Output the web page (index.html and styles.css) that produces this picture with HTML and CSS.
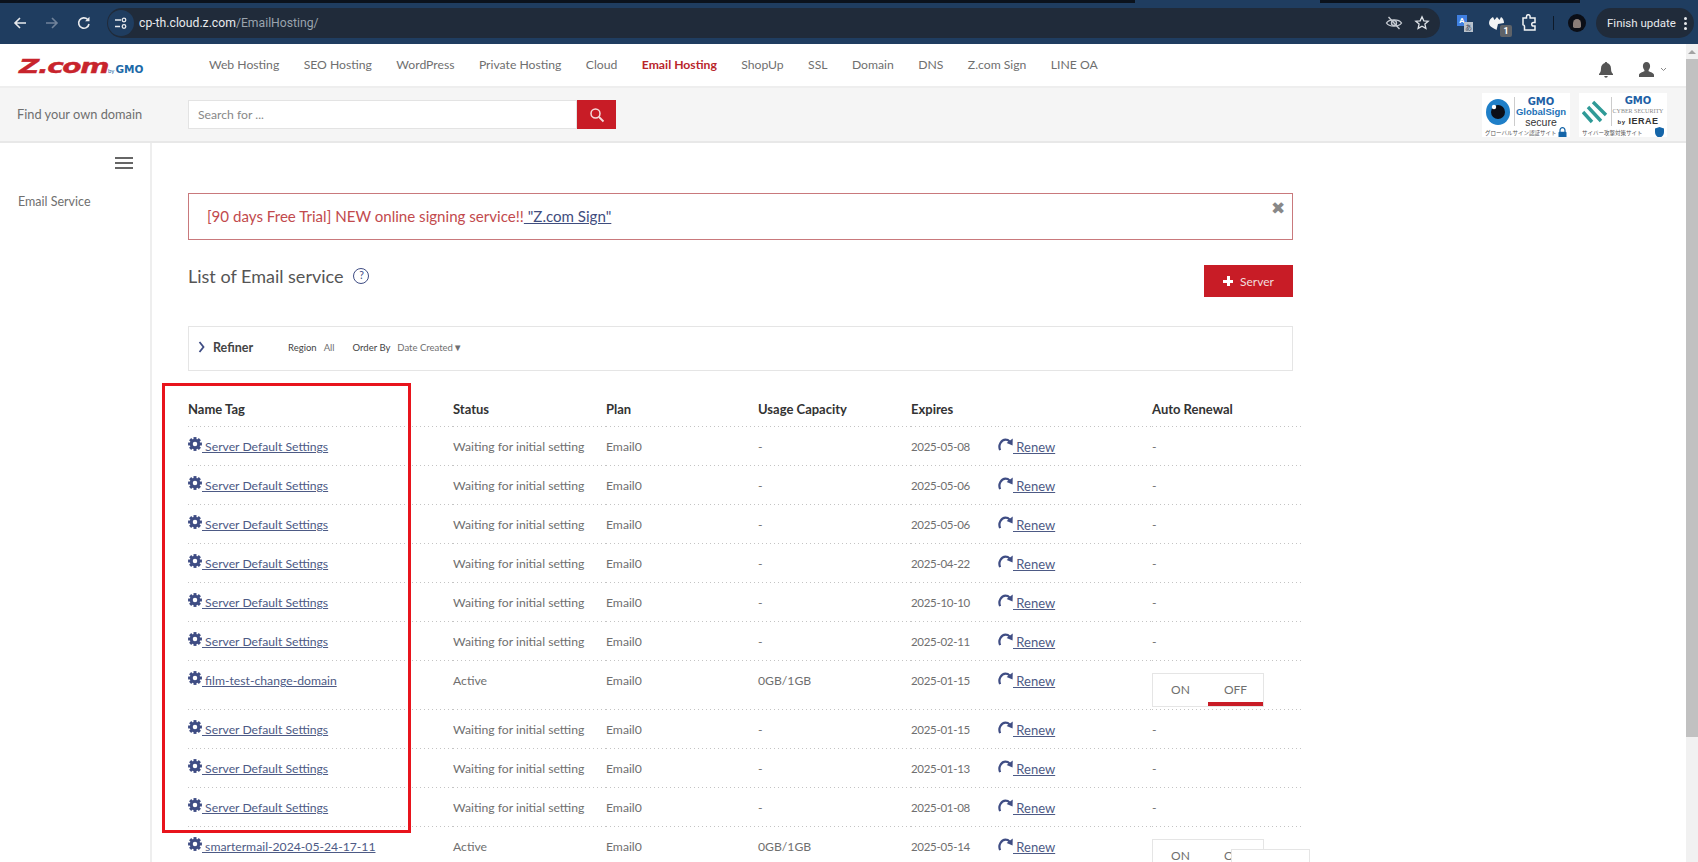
FILE: index.html
```html
<!DOCTYPE html>
<html lang="en">
<head>
<meta charset="utf-8">
<title>Email Hosting</title>
<link rel="stylesheet" href="styles.css">
</head>
<body>
<svg class="defs" width="0" height="0" aria-hidden="true">
  <symbol id="gear" viewBox="0 0 16 16">
    <g fill="#3f4d84">
      <rect x="6.300" y="0.100" width="3.400" height="4"/>
      <rect x="6.300" y="0.100" width="3.400" height="4" transform="rotate(45 8 8)"/>
      <rect x="6.300" y="0.100" width="3.400" height="4" transform="rotate(90 8 8)"/>
      <rect x="6.300" y="0.100" width="3.400" height="4" transform="rotate(135 8 8)"/>
      <rect x="6.300" y="0.100" width="3.400" height="4" transform="rotate(180 8 8)"/>
      <rect x="6.300" y="0.100" width="3.400" height="4" transform="rotate(225 8 8)"/>
      <rect x="6.300" y="0.100" width="3.400" height="4" transform="rotate(270 8 8)"/>
      <rect x="6.300" y="0.100" width="3.400" height="4" transform="rotate(315 8 8)"/>
    </g>
    <circle cx="8" cy="8" r="4.300" fill="none" stroke="#3f4d84" stroke-width="3.400"/>
  </symbol>
  <symbol id="renew" viewBox="0 0 16 14">
    <path d="M2.200 13C-.2 7.500 3.600 1.800 8 1.800c1.800 0 3.300.7 4.400 2" fill="none" stroke="#3f4d84" stroke-width="2.400"/>
    <path d="M15.800 .6 15.600 8 9.200 5.400z" fill="#3f4d84"/>
  </symbol>
</svg>

<div class="chrome">
  <div class="tabstrip">
    <span class="tabdark tab-a"></span>
    <span class="tabdark tab-b"></span>
  </div>
  <div class="toolbar">
    <svg class="nav-ic first" width="16" height="16" viewBox="0 0 16 16"><path d="M14 8H3M8 3 3 8l5 5" fill="none" stroke="#e8eaed" stroke-width="1.600"/></svg>
    <svg class="nav-ic" width="16" height="16" viewBox="0 0 16 16"><path d="M2 8h11M8 3l5 5-5 5" fill="none" stroke="#71839a" stroke-width="1.600"/></svg>
    <svg class="nav-ic" width="16" height="16" viewBox="0 0 16 16"><path d="M13 9a5.200 5.200 0 1 1-1.300-4.500" fill="none" stroke="#e8eaed" stroke-width="1.600"/><path d="M13.500 1.800v4.400H9.100z" fill="#e8eaed"/></svg>
    <div class="omnibox">
      <span class="site-chip">
        <svg width="14" height="14" viewBox="0 0 14 14"><g fill="none" stroke="#e8eaed" stroke-width="1.300"><path d="M1 4h6M1 10.500h5"/><circle cx="10" cy="4" r="1.800"/><circle cx="10" cy="10.500" r="1.800"/></g></svg>
      </span>
      <span class="url">cp-th.cloud.z.com<span class="url-path">/EmailHosting/</span></span>
      <span class="omni-right">
        <svg width="18" height="16" viewBox="0 0 18 16"><g fill="none" stroke="#c5cad1" stroke-width="1.400"><path d="M1.500 8C4 3.800 14 3.800 16.500 8 14 12.200 4 12.200 1.500 8z"/><circle cx="9" cy="8" r="2.500"/><path d="M3.500 2 14.500 14"/></g></svg>
        <svg width="16" height="16" viewBox="0 0 16 16"><path d="m8 1.800 1.800 4 4.400.4-3.300 2.900 1 4.300L8 11.200l-3.900 2.200 1-4.300-3.300-2.900 4.400-.4z" fill="none" stroke="#dfe3e8" stroke-width="1.300"/></svg>
      </span>
    </div>
    <div class="ext-group">
      <span class="ext-translate"><span class="tr-a">A</span><span class="tr-b">あ</span></span>
      <span class="ext-badged">
        <svg width="20" height="16" viewBox="0 0 20 16"><path d="M2 8c0-3 2-5 4-6l1.500 3L10 2l2.500 3L14 2c2 1 3 3.500 3 6l-6 1-1.500 6C7 13 2 12 2 8z" fill="#f1f3f4"/></svg>
        <span class="ext-count">1</span>
      </span>
      <svg class="ext-puzzle" width="18" height="18" viewBox="0 0 18 18"><path d="M3 4h3.500V2.500a1.800 1.800 0 0 1 3.600 0V4H15v4.500h-1.500a1.800 1.800 0 0 0 0 3.600H15V16H4.500v-3.500a1.800 1.800 0 0 0-1.500-1.800z" fill="none" stroke="#f1f3f4" stroke-width="1.500"/></svg>
      <span class="ext-sep"></span>
      <span class="avatar"><span class="avatar-in"></span></span>
      <span class="finish">Finish update<span class="dots"><i></i><i></i><i></i></span></span>
    </div>
  </div>
</div>

<div class="viewport">
  <div class="page">
    <header class="site-head">
      <div class="logo"><span class="logo-z">Z.com</span><span class="logo-by">by</span><span class="logo-gmo">GMO</span></div>
      <nav class="main-nav">
        <a>Web Hosting</a><a>SEO Hosting</a><a>WordPress</a><a>Private Hosting</a><a>Cloud</a><a class="current">Email Hosting</a><a>ShopUp</a><a>SSL</a><a>Domain</a><a>DNS</a><a>Z.com Sign</a><a>LINE OA</a>
      </nav>
      <div class="head-icons">
        <svg width="16" height="17" viewBox="0 0 16 17"><path d="M8 1c.8 0 1.200.5 1.200 1.100C11.500 2.700 13 4.700 13 7.500c0 3 .8 4.300 2 5.500v1H1v-1c1.200-1.200 2-2.500 2-5.500 0-2.800 1.500-4.800 3.800-5.400C6.800 1.500 7.200 1 8 1zM6.300 15h3.400c0 1-.7 1.700-1.700 1.700S6.300 16 6.300 15z" fill="#555"/></svg>
        <span class="user-ic">
          <svg width="17" height="17" viewBox="0 0 17 17"><path d="M8.500 1c2.300 0 3.600 1.700 3.600 4 0 1.700-.7 3-1.500 4v1.300c2 .8 5.400 1.800 5.400 3.700v2H1v-2c0-1.900 3.400-2.900 5.400-3.700V9c-.8-1-1.500-2.300-1.500-4 0-2.300 1.300-4 3.600-4z" fill="#555"/></svg>
          <svg width="7" height="5" viewBox="0 0 7 5"><path d="m1 1 2.500 2.500L6 1" fill="none" stroke="#888" stroke-width="1"/></svg>
        </span>
      </div>
    </header>

    <div class="search-band">
      <span class="find-label">Find your own domain</span>
      <div class="search-box">
        <span class="search-input">Search for ...</span>
        <span class="search-btn"><svg width="16" height="16" viewBox="0 0 16 16"><circle cx="6.500" cy="6.500" r="4.500" fill="none" stroke="#f5dcdc" stroke-width="1.500"/><path d="m10 10 4.500 4.500" stroke="#f5dcdc" stroke-width="1.800"/></svg></span>
      </div>
      <div class="badges">
        <div class="badge">
          <div class="badge-top">
            <svg class="eye" width="26" height="28" viewBox="0 0 26 28"><ellipse cx="13" cy="14" rx="12" ry="13" fill="#1f7fc8"/><circle cx="13" cy="14" r="7" fill="#0c0f18"/><circle cx="9" cy="9" r="2.200" fill="#fff"/></svg>
            <div class="badge-txt">
              <span class="b-gmo">GMO</span>
              <span class="b-gs">GlobalSign</span>
              <span class="b-sec">secure</span>
            </div>
          </div>
          <div class="badge-foot"><span>グローバルサイン認証サイト</span><svg width="9" height="11" viewBox="0 0 9 11"><path d="M2 5V3.200a2.500 2.500 0 0 1 5 0V5" fill="none" stroke="#1565a8" stroke-width="1.200"/><rect x=".5" y="4.800" width="8" height="6" rx="1" fill="#1565a8"/></svg></div>
        </div>
        <div class="badge">
          <div class="badge-top">
            <svg class="eye" width="26" height="24" viewBox="0 0 26 24"><g stroke="#2f9a97" stroke-width="3.400"><path d="M11 2 24 15M6 7 19 21M1 12 10 22"/></g></svg>
            <div class="badge-txt">
              <span class="b-gmo">GMO</span>
              <span class="b-cy">CYBER SECURITY</span>
              <span class="b-ie"><small>by</small> IERAE</span>
            </div>
          </div>
          <div class="badge-foot"><span>サイバー攻撃対策サイト</span><svg width="9" height="11" viewBox="0 0 9 11"><path d="M4.500 0 9 1.500V5c0 3-2 5-4.500 6C2 10 0 8 0 5V1.500z" fill="#1565a8"/></svg></div>
        </div>
      </div>
    </div>

    <div class="content-row">
      <aside class="side">
        <div class="burger"><i></i><i></i><i></i></div>
        <a class="side-link">Email Service</a>
      </aside>
      <main class="main">
        <div class="alert">
          <span>[90 days Free Trial] NEW online signing service!!<a class="alert-link"> "Z.com Sign"</a></span>
          <span class="alert-x">✖</span>
        </div>
        <div class="title-row">
          <h1 class="title">List of Email service<span class="help">?</span></h1>
          <button class="add-btn"><span class="plus"></span>Server</button>
        </div>
        <div class="refiner">
          <svg width="7" height="12" viewBox="0 0 7 12"><path d="m1.500 1 4 5-4 5" fill="none" stroke="#3f4d84" stroke-width="1.800"/></svg>
          <strong class="ref-name">Refiner</strong>
          <span class="ref-key">Region</span><span class="ref-val gap-a">All</span>
          <span class="ref-key">Order By</span><span class="ref-val">Date Created▼</span>
        </div>
        <table class="servers">
          <thead>
            <tr><th class="c-name">Name Tag</th><th class="c-status">Status</th><th class="c-plan">Plan</th><th class="c-usage">Usage Capacity</th><th class="c-exp">Expires</th><th class="c-renew"></th><th class="c-auto">Auto Renewal</th></tr>
          </thead>
          <tbody>
            <tr><td><svg class="gear"><use href="#gear"/></svg><a class="lnk"> Server Default Settings</a></td><td>Waiting for initial setting</td><td>Email0</td><td>-</td><td class="date">2025-05-08</td><td><svg class="re"><use href="#renew"/></svg><a class="lnk renew"> Renew</a></td><td>-</td></tr>
            <tr><td><svg class="gear"><use href="#gear"/></svg><a class="lnk"> Server Default Settings</a></td><td>Waiting for initial setting</td><td>Email0</td><td>-</td><td class="date">2025-05-06</td><td><svg class="re"><use href="#renew"/></svg><a class="lnk renew"> Renew</a></td><td>-</td></tr>
            <tr><td><svg class="gear"><use href="#gear"/></svg><a class="lnk"> Server Default Settings</a></td><td>Waiting for initial setting</td><td>Email0</td><td>-</td><td class="date">2025-05-06</td><td><svg class="re"><use href="#renew"/></svg><a class="lnk renew"> Renew</a></td><td>-</td></tr>
            <tr><td><svg class="gear"><use href="#gear"/></svg><a class="lnk"> Server Default Settings</a></td><td>Waiting for initial setting</td><td>Email0</td><td>-</td><td class="date">2025-04-22</td><td><svg class="re"><use href="#renew"/></svg><a class="lnk renew"> Renew</a></td><td>-</td></tr>
            <tr><td><svg class="gear"><use href="#gear"/></svg><a class="lnk"> Server Default Settings</a></td><td>Waiting for initial setting</td><td>Email0</td><td>-</td><td class="date">2025-10-10</td><td><svg class="re"><use href="#renew"/></svg><a class="lnk renew"> Renew</a></td><td>-</td></tr>
            <tr><td><svg class="gear"><use href="#gear"/></svg><a class="lnk"> Server Default Settings</a></td><td>Waiting for initial setting</td><td>Email0</td><td>-</td><td class="date">2025-02-11</td><td><svg class="re"><use href="#renew"/></svg><a class="lnk renew"> Renew</a></td><td>-</td></tr>
            <tr><td><svg class="gear"><use href="#gear"/></svg><a class="lnk"> film-test-change-domain</a></td><td>Active</td><td>Email0</td><td>0GB/1GB</td><td class="date">2025-01-15</td><td><svg class="re"><use href="#renew"/></svg><a class="lnk renew"> Renew</a></td><td class="t-cell"><div class="toggle"><span>ON</span><span class="off">OFF</span></div></td></tr>
            <tr><td><svg class="gear"><use href="#gear"/></svg><a class="lnk"> Server Default Settings</a></td><td>Waiting for initial setting</td><td>Email0</td><td>-</td><td class="date">2025-01-15</td><td><svg class="re"><use href="#renew"/></svg><a class="lnk renew"> Renew</a></td><td>-</td></tr>
            <tr><td><svg class="gear"><use href="#gear"/></svg><a class="lnk"> Server Default Settings</a></td><td>Waiting for initial setting</td><td>Email0</td><td>-</td><td class="date">2025-01-13</td><td><svg class="re"><use href="#renew"/></svg><a class="lnk renew"> Renew</a></td><td>-</td></tr>
            <tr><td><svg class="gear"><use href="#gear"/></svg><a class="lnk"> Server Default Settings</a></td><td>Waiting for initial setting</td><td>Email0</td><td>-</td><td class="date">2025-01-08</td><td><svg class="re"><use href="#renew"/></svg><a class="lnk renew"> Renew</a></td><td>-</td></tr>
            <tr><td><svg class="gear"><use href="#gear"/></svg><a class="lnk"> smartermail-2024-05-24-17-11</a></td><td>Active</td><td>Email0</td><td>0GB/1GB</td><td class="date">2025-05-14</td><td><svg class="re"><use href="#renew"/></svg><a class="lnk renew"> Renew</a></td><td class="t-cell"><div class="toggle"><span>ON</span><span class="off">OFF</span></div></td></tr>
          </tbody>
        </table>
        <div class="highlight"></div>
        <div class="float-tip"></div>
      </main>
    </div>
  </div>
  <div class="scrollbar">
    <span class="sb-arrow"></span>
    <span class="sb-thumb"></span>
  </div>
</div>
</body>
</html>
```

FILE: styles.css
```css
* { box-sizing: border-box; }
html, body { margin: 0; height: 862px; overflow: hidden; background: #fff; }
body { font-family: "Lato", "Liberation Sans", sans-serif; font-size: 12.2px; color: #6f6f6f; }
.defs { position: absolute; }

/* browser chrome */
.chrome { height: 44px; background: #1f3d60; }
.tabstrip { height: 8px; display: flex; background: #1f3d60; }
.tabdark { height: 3px; background: #0b121c; display: block; }
.tab-a { width: 1135px; }
.tab-b { width: 260px; margin-left: 185px; }
.toolbar { height: 30px; display: flex; align-items: center; padding-left: 12px; }
.nav-ic { margin-right: 16px; flex: none; }
.omnibox { width: 1333px; height: 30px; margin-left: -1px; background: #202b3a; border-radius: 15px; display: flex; align-items: center; padding: 0 10px 0 1px; flex: none; }
.site-chip { width: 26px; height: 26px; border-radius: 50%; background: #1f3d60; display: flex; align-items: center; justify-content: center; }
.url { font-family: "Roboto", sans-serif; font-size: 12.200px; color: #e8eaed; margin-left: 5px; }
.url-path { color: #9aa3ad; }
.omni-right { margin-left: auto; display: flex; align-items: center; gap: 11px; }
.ext-group { display: flex; align-items: center; flex: 1; padding-left: 17px; position: relative; }
.ext-translate { width: 16px; height: 17px; position: relative; display: block; }
.tr-a { position: absolute; left: 0; top: 0; width: 10px; height: 11px; background: #3f7fe0; color: #fff; font: 700 8px/11px "Roboto", sans-serif; text-align: center; }
.tr-b { position: absolute; right: 0; bottom: 0; width: 9px; height: 10px; background: #b9c2cc; color: #39465a; font: 7px/10px "Noto Sans CJK JP", sans-serif; text-align: center; }
.ext-badged { position: relative; margin-left: 14px; display: block; width: 20px; height: 16px; }
.ext-count { position: absolute; right: -5px; bottom: -6px; width: 12px; height: 12px; background: #5f6368; color: #fff; border-radius: 2px; font: 700 9px/12px "Roboto", sans-serif; text-align: center; }
.ext-puzzle { margin-left: 13px; }
.ext-sep { width: 1px; height: 14px; background: #0e1a29; margin-left: 15px; }
.avatar { width: 18px; height: 18px; border-radius: 50%; background: #0b0e16; margin-left: 14px; display: flex; align-items: center; justify-content: center; }
.avatar-in { width: 8px; height: 9px; background: #8a7d78; border-radius: 50% 50% 20% 20%; }
.finish { height: 30px; width: 98px; margin-left: 10px; background: #202b3a; border-radius: 15px; color: #e8eaed; font: 11.500px/30px "Roboto", sans-serif; padding-left: 11px; display: flex; align-items: center; flex: none; white-space: nowrap; }
.dots { display: flex; flex-direction: column; gap: 2px; margin-left: 8px; }
.dots i { width: 3px; height: 3px; border-radius: 50%; background: #e8eaed; display: block; }

/* page */
.viewport { display: flex; height: 818px; overflow: hidden; }
.page { flex: 1; min-width: 0; }
.scrollbar { width: 12px; background: #f1f1f1; display: flex; flex-direction: column; align-items: center; flex: none; padding-top: 6px; }
.sb-arrow { width: 0; height: 0; border-left: 4px solid transparent; border-right: 4px solid transparent; border-bottom: 4px solid #a3a3a3; }
.sb-thumb { width: 12px; height: 678px; background: #c1c1c1; margin-top: 5px; }

.site-head { height: 44px; background: #fff; border-bottom: 2px solid #eee; display: flex; align-items: flex-start; position: relative; }
.logo { width: 209px; padding: 11px 0 0 19px; display: flex; align-items: baseline; white-space: nowrap; flex: none; }
.logo-z { font: italic 700 20px/22px "DejaVu Sans", sans-serif; color: #c8242c; letter-spacing: -1px; -webkit-text-stroke: .4px #c8242c; transform: scaleX(1.400); transform-origin: 0 50%; width: 89px; display: block; }
.logo-by { font-size: 6px; color: #1c6aa8; margin-right: 1px; }
.logo-gmo { font: 700 10.500px "DejaVu Sans", sans-serif; color: #1c6aa8; }
.main-nav { display: flex; gap: 24.400px; padding-top: 12px; font-size: 12.200px; line-height: 17px; color: #6f6f6f; white-space: nowrap; }
.current { color: #b9252b; font-weight: 700; }
.head-icons { margin-left: auto; padding: 17px 19px 0 0; display: flex; align-items: flex-start; gap: 24px; }
.user-ic { display: flex; align-items: center; gap: 5px; }

.search-band { height: 55px; background: #f5f5f5; border-bottom: 2px solid #e8e8e8; display: flex; align-items: flex-start; padding-left: 17px; }
.find-label { width: 171px; padding-top: 18px; flex: none; font-size: 12.800px; }
.search-box { display: flex; margin-top: 12px; height: 29px; width: 428px; }
.search-input { flex: 1; background: #fff; border: 1px solid #e3e3e3; padding: 0 9px; line-height: 27px; color: #888; }
.search-btn { width: 39px; background: #c81c26; display: flex; align-items: center; justify-content: center; }
.badges { margin-left: auto; padding: 5px 19px 0 0; display: flex; gap: 9px; }
.badge { width: 88px; height: 44px; background: #fff; padding: 3px 3px 0; overflow: hidden; }
.badge-top { display: flex; align-items: center; height: 31px; }
.eye { flex: none; margin-right: 3px; }
.badge-txt { border-left: 1px solid #ccc; flex: 1; display: flex; flex-direction: column; align-items: center; height: 29px; justify-content: center; }
.b-gmo { font: 700 10px/10px "DejaVu Sans", sans-serif; color: #1d5fa5; }
.b-gs { font: 700 9.500px/10px "Liberation Sans", sans-serif; color: #1d72b8; }
.b-sec { font: 10.500px/10px "Liberation Sans", sans-serif; color: #333; }
.b-cy { font: 6px/10px "Liberation Serif", serif; color: #888; white-space: nowrap; }
.b-ie { font: 700 9px/10px "Liberation Sans", sans-serif; color: #333; letter-spacing: .5px; }
.b-ie small { font-size: 6px; }
.badge-foot { display: flex; align-items: center; justify-content: space-between; font: 5.500px/10px "Noto Sans CJK JP", sans-serif; color: #555; white-space: nowrap; }
.badge-foot svg { flex: none; }

.content-row { display: flex; position: relative; }
.side { width: 152px; border-right: 2px solid #eee; height: 740px; padding-left: 18px; flex: none; }
.burger { display: flex; flex-direction: column; gap: 3px; width: 18px; margin: 14px 0 0 97px; }
.burger i { height: 2px; background: #666; display: block; }
.side-link { display: block; margin-top: 25px; font-size: 12.500px; color: #6f6f6f; }
.main { width: 1105px; margin-left: 36px; position: relative; flex: none; }
.alert { margin-top: 50px; height: 47px; border: 1px solid #c9797c; color: #c24a4d; font-size: 15.100px; padding: 13px 0 0 18px; position: relative; }
.alert-link { color: #3f4d7e; text-decoration: underline; }
.alert-x { position: absolute; right: 7px; top: 5px; font-size: 17px; color: #888; line-height: 18px; }
.title-row { display: flex; justify-content: space-between; align-items: flex-start; margin-top: 25px; }
.title { margin: -1px 0 0; font-size: 18px; font-weight: 400; line-height: 24px; color: #555; display: flex; align-items: center; }
.help { width: 16px; height: 16px; border: 1.500px solid #3f4d84; border-radius: 50%; color: #3f4d84; font-size: 10.500px; line-height: 13px; text-align: center; margin-left: 10px; }
.add-btn { width: 89px; height: 32px; background: #c81c26; border: 0; color: #f2dede; font: 12px "Lato", sans-serif; display: flex; align-items: center; justify-content: center; gap: 7px; padding: 0; }
.plus { width: 10px; height: 10px; display: block; background: linear-gradient(#fff, #fff) center / 10px 3px no-repeat, linear-gradient(#fff, #fff) center / 3px 10px no-repeat; }
.refiner { margin-top: 29px; height: 45px; border: 1px solid #e5e5e5; display: flex; align-items: center; padding: 0 0 3px 9px; font-size: 9.500px; white-space: nowrap; }
.ref-name { font-size: 12.500px; color: #444; margin: 0 35px 0 8px; }
.ref-key { color: #444; margin-right: 7px; }
.gap-a { margin-right: 18px; }
.ref-val { color: #6f6f6f; }

.servers { width: 1114px; border-collapse: collapse; table-layout: fixed; margin-top: 20px; font-size: 12.200px; }
.servers th, .servers td { background: linear-gradient(to right, #c4c4c4 1px, transparent 1px) 0 100% / 4px 1px repeat-x; }
.servers th { text-align: left; font-weight: 700; color: #333; height: 36px; padding: 0; font-size: 13px; }
.servers td { height: 39px; padding: 11px 0 0; vertical-align: top; line-height: 17px; white-space: nowrap; }
.servers .date { font-size: 11.500px; letter-spacing: -.3px; }
.servers .t-cell { height: 49px; padding-top: 12px; }
.c-name { width: 265px; }
.c-status { width: 153px; }
.c-plan { width: 152px; }
.c-usage { width: 153px; }
.c-exp { width: 87px; }
.c-renew { width: 154px; }
.gear { width: 14px; height: 14px; vertical-align: -1px; position: relative; top: -1px; }
.re { width: 15px; height: 13px; vertical-align: -1px; position: relative; top: -1px; }
.lnk { color: #4d5a85; text-decoration: underline; white-space: pre; }
.renew { position: relative; top: 1px; font-size: 13px; }
.toggle { width: 112px; height: 34px; border: 1px solid #e5e5e5; display: flex; }
.toggle span { flex: 1; text-align: center; line-height: 32px; color: #6f6f6f; font-size: 12px; }
.toggle .off { border-bottom: 4px solid #c81c26; }
.highlight { position: absolute; left: -26px; top: 240px; width: 249px; height: 450px; border: 3px solid #e8141c; pointer-events: none; }
.float-tip { position: absolute; left: 1043px; top: 706px; width: 79px; height: 20px; background: #fff; border: 1px solid #e5e5e5; }
```
